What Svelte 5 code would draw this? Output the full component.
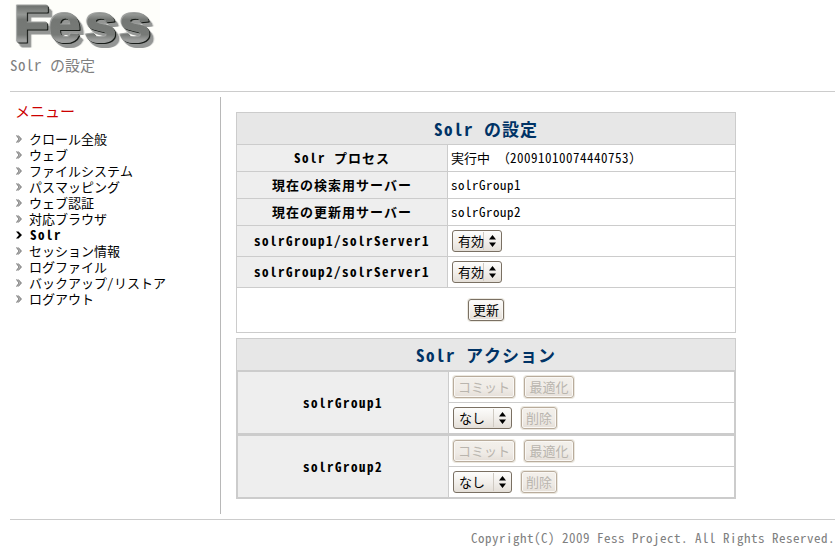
<script>
  const menu = [
    'クロール全般', 'ウェブ', 'ファイルシステム', 'パスマッピング', 'ウェブ認証', '対応ブラウザ',
    'Solr', 'セッション情報', 'ログファイル', 'バックアップ/リストア', 'ログアウト'
  ];
  const current = 'Solr';
  const info = [
    ['Solr プロセス', '実行中 （20091010074440753）'],
    ['現在の検索用サーバー', 'solrGroup1'],
    ['現在の更新用サーバー', 'solrGroup2']
  ];
  const servers = ['solrGroup1/solrServer1', 'solrGroup2/solrServer1'];
  const groups = ['solrGroup1', 'solrGroup2'];

  // Half-width and full-width runs have their own tracking.
  const runs = (s) => s.match(/[\x20-\x7e]+|[^\x20-\x7e]+/g) ?? [];
  const isLatin = (s) => s.charCodeAt(0) < 127;
</script>

{#snippet txt(s)}<span class="txt">{#each runs(s) as r}<span class={isLatin(r) ? 'half' : 'full'}>{r}</span>{/each}</span>{/snippet}

{#snippet select(label, wide)}
  <button class="control select" class:wide>
    <span class="value">{@render txt(label)}</span>
    <svg class="arrows" width="7" height="12" viewBox="0 0 7 12"><path d="M3.5 0L7 4.5H0ZM0 7.5H7L3.5 12Z" /></svg>
  </button>
{/snippet}

<div class="page">
  <header>
    <svg class="logo" width="150" height="50" viewBox="10 0 150 50" role="img" aria-label="Fess">
      <defs>
        <linearGradient id="metal" x1="0" y1="0" x2="0" y2="1">
          <stop offset="0.2" stop-color="#727572" />
          <stop offset="0.34" stop-color="#949794" />
          <stop offset="0.42" stop-color="#747774" />
          <stop offset="0.68" stop-color="#777a77" />
          <stop offset="0.77" stop-color="#9c9e9c" />
        </linearGradient>
      </defs>
      <rect x="10" width="150" height="50" fill="#fefefa" />
      <text class="word" transform="scale(1.1 1)" x="12.7 44.4 77 108.2" y="42.2" fill="url(#metal)" stroke="url(#metal)" stroke-width="1.2">Fess</text>
    </svg>
    <div class="subtitle">{@render txt('Solr の設定')}</div>
  </header>

  <div class="body">
    <nav>
      <h3>メニュー</h3>
      <ul>
        {#each menu as item}
          <li class:bold={item === current}>
            <svg width="6" height="8" viewBox="0 0 6 8">
              {#if item === current}
                <path d="M0 0.5H2.5L6 4L2.5 7.5H0L3 4Z" fill="#000" />
              {:else}
                <path d="M0 0.5H2.5L6 4L2.5 7.5H0L3 4Z" fill="#bbb" />
                <path d="M0.5 0.5L3 4L0.5 7.5M2.2 0.5L5.3 4L2.2 7.5" fill="none" stroke="#777" stroke-width="0.9" />
              {/if}
            </svg>
            <span class="label">{@render txt(item)}</span>
          </li>
        {/each}
      </ul>
    </nav>

    <main>
      <section class="settings">
        <h2>{@render txt('Solr の設定')}</h2>
        {#each info as [name, value]}
          <div class="row">
            <div class="th bold">{@render txt(name)}</div>
            <div class="td">{@render txt(value)}</div>
          </div>
        {/each}
        {#each servers as name}
          <div class="row tall">
            <div class="th bold">{@render txt(name)}</div>
            <div class="td controls">{@render select('有効', false)}</div>
          </div>
        {/each}
        <div class="submit"><button class="control btn">更新</button></div>
      </section>

      <section class="actions">
        <h2>{@render txt('Solr アクション')}</h2>
        {#each groups as name}
          <div class="group">
            <div class="th bold">{@render txt(name)}</div>
            <div class="cells">
              <div class="controls">
                <button class="control btn w4" disabled>コミット</button>
                <button class="control btn w3" disabled>最適化</button>
              </div>
              <div class="controls">
                {@render select('なし', true)}
                <button class="control btn" disabled>削除</button>
              </div>
            </div>
          </div>
        {/each}
      </section>
    </main>
  </div>

  <footer>{@render txt('Copyright(C) 2009 Fess Project. All Rights Reserved.')}</footer>
</div>

<style>
  :global(body) { margin: 0; background: #fff; overflow: hidden; }
  .page {
    width: 835px; height: 552px; box-sizing: border-box; padding-left: 10px;
    overflow: hidden; color: #000;
    font: 13px/16px "Noto Sans Mono CJK JP", "Noto Sans CJK JP", sans-serif;
    text-spacing-trim: space-all;
  }
  .txt { white-space: pre; }
  .half { letter-spacing: 0.5px; }
  .bold { font-weight: 700; }
  .bold .half { letter-spacing: 1.5px; }
  .bold .full { letter-spacing: 1px; }
  header { height: 91px; border-bottom: 1px solid #ccc; }
  .logo { display: block; }
  .word {
    font-family: "Liberation Sans", sans-serif; font-weight: 700; font-size: 52.5px; stroke-linejoin: round;
    filter: drop-shadow(-0.5px -0.5px 0 #9ea09e) drop-shadow(1.3px 1.3px 0 #171b17) drop-shadow(3.5px 4px 0.3px #949694);
  }
  .subtitle { font-size: 15px; line-height: 20px; margin-top: 5px; color: #808080; }
  .body { display: flex; height: 422px; padding-top: 5px; box-sizing: border-box; }
  nav { width: 210px; height: 417px; border-right: 1px solid #b8b8b8; }
  h3 { margin: 4px 0 0 5px; font-size: 15px; line-height: 20px; font-weight: 400; color: #c00; }
  ul { list-style: none; margin: 10px 0 0 4px; padding: 0; }
  li { display: flex; align-items: center; height: 16px; }
  li svg { margin: 0 7.5px 0 1.5px; }
  li .label { line-height: 16px; }
  li.bold svg { margin-right: 8.5px; }
  main { width: 500px; margin: 15px 0 0 15px; }
  section { box-sizing: border-box; width: 500px; }
  h2 {
    margin: 0; height: 31px; line-height: 31px; background: #e7e7e7;
    text-align: center; font-size: 17px; font-weight: 700; color: #036;
  }
  h2 .half { letter-spacing: 1.5px; }
  h2 .full { letter-spacing: 1px; }
  .settings { border: 1px solid #ccc; height: 221px; }
  .row { display: flex; height: 26px; border-top: 1px solid #ccc; }
  .row.tall { height: 30px; }
  .th {
    width: 210px; flex: none; display: flex; align-items: center; justify-content: center;
    background: #eee; border-right: 1px solid #ccc;
  }
  .td { flex: 1; display: flex; align-items: center; padding-left: 3px; }
  .td.controls { padding-left: 4px; }
  .controls { display: flex; align-items: center; padding-left: 4px; }
  .submit { height: 44px; border-top: 1px solid #ccc; display: flex; justify-content: center; align-items: center; }
  .actions { margin-top: 5px; }
  .actions h2 { border: 1px solid #ccc; border-bottom: 0; }
  .group { display: flex; height: 61px; border: 2px solid #ccc; border-top-width: 3px; border-bottom-width: 0; }
  h2 + .group { border-top-width: 2px; }
  .group:last-child { border-bottom-width: 2px; }
  .cells { flex: 1; }
  .cells .controls { height: 30px; }
  .cells .controls + .controls { border-top: 1px solid #ccc; }
  .control {
    box-sizing: border-box; height: 22px; margin: 0; padding: 0; flex: none;
    font: inherit; color: #000; white-space: nowrap;
    border: 1px solid #7a7063; border-radius: 3px;
    background: linear-gradient(#fdfdfc, #f1eeea 55%, #e4dfd8);
    display: flex; align-items: center; justify-content: center;
  }
  .btn { width: 36px; box-shadow: inset 0 0 0 1px #faf8f5, 0 0 0 1px #ebe8e0; }
  .btn:disabled { color: #b9b5ae; border-color: #b9ac9c; background: linear-gradient(#f3f0eb, #efebe6 60%, #e5dfd8); }
  .w4 { width: 62px; margin-right: 9px; }
  .w3 { width: 50px; }
  .select { width: 50px; justify-content: flex-start; padding-left: 5px; }
  .select .value { width: 25px; height: 18px; line-height: 18px; text-align: left; border-right: 1px solid #cfcac2; }
  .arrows { margin-left: 5px; fill: #000; }
  .select.wide { width: 59px; margin-right: 9px; }
  .select.wide .value { width: 34px; }
  footer { border-top: 1px solid #ccc; margin-top: 5px; padding-top: 9px; text-align: right; color: #808080; line-height: 18px; }
</style>
